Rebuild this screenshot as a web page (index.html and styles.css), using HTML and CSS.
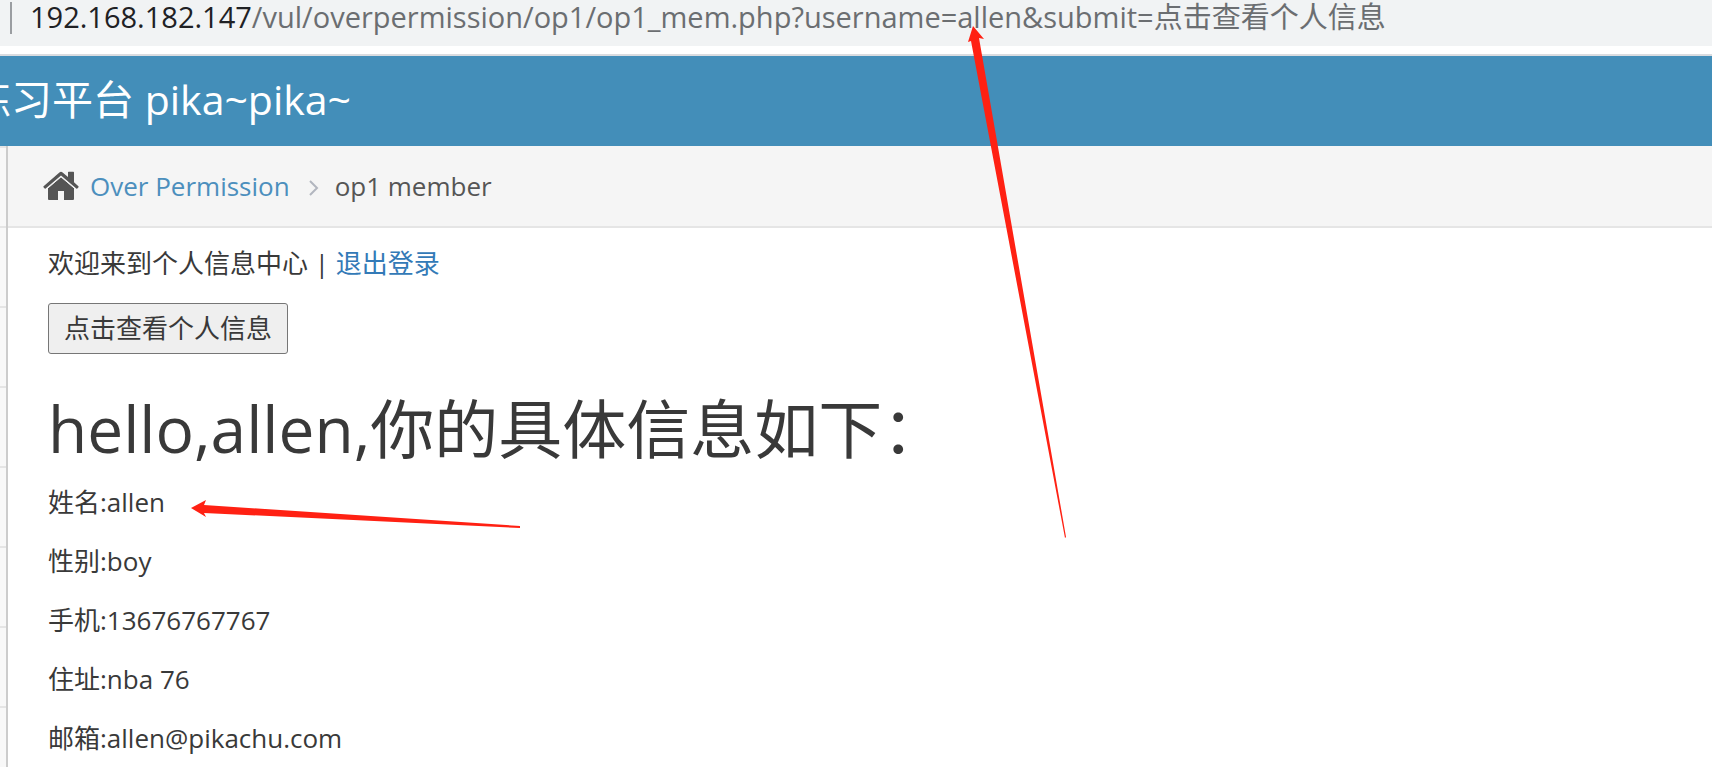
FILE: index.html
```html
<!DOCTYPE html>
<html lang="zh-CN">
<head>
<meta charset="utf-8">
<title>op1 member</title>
<link rel="stylesheet" href="styles.css">
</head>
<body>
<div class="address-bar">
  <span class="address-divider"></span>
  <span class="address-text"><span class="address-host">192.168.182.147</span>/vul/overpermission/op1/op1_mem.php?username=allen&amp;submit=点击查看个人信息</span>
</div>
<header class="navbar"><span class="brand">练习平台 pika~pika~</span></header>
<div class="main">
  <aside class="sidebar">
    <div class="sidebar-item"></div>
    <div class="sidebar-item"></div>
    <div class="sidebar-item"></div>
    <div class="sidebar-item"></div>
    <div class="sidebar-item"></div>
    <div class="sidebar-item"></div>
    <div class="sidebar-item"></div>
    <div class="sidebar-item"></div>
  </aside>
  <main class="content">
    <nav class="breadcrumb">
      <svg class="home-icon" viewBox="0 0 36 30" aria-hidden="true">
        <path d="M18 6 31 17V28q0 1-1 1H21V20H15V29H6q-1 0-1-1V17z"/>
        <path d="M.6 15.200 16.400 1.400q1.600-1.300 3.200 0L25 6V1.400q0-.6.6-.6h4.800q.6 0 .6.6v9.800l4.400 4q.5.500.1 1l-1.200 1.300q-.5.500-1 .1L18 4.600 2.700 17.600q-.5.400-1-.1L.5 16.200q-.4-.5.100-1z"/>
        <path class="roof-gap" d="M3 18.600 18 5.800 33 18.600"/>
      </svg>
      <a class="crumb-link" href="#">Over Permission</a>
      <svg class="chevron" viewBox="0 0 10 18" aria-hidden="true"><path d="M1 2 8 9 1 16"/></svg>
      <span class="crumb-current">op1 member</span>
    </nav>
    <div class="page-body">
      <p class="welcome">欢迎来到个人信息中心 | <a class="logout" href="#">退出登录</a></p>
      <form class="query"><button class="query-button" type="button">点击查看个人信息</button></form>
      <h1 class="greeting">hello,allen,你的具体信息如下：</h1>
      <p class="detail">姓名:allen</p>
      <p class="detail">性别:boy</p>
      <p class="detail">手机:13676767767</p>
      <p class="detail">住址:nba 76</p>
      <p class="detail">邮箱:allen@pikachu.com</p>
    </div>
  </main>
</div>
<svg class="arrows" width="1100" height="560" aria-hidden="true">
  <path d="M973 26 984 39 979 38 1066 537 1065 538 971 41 968 42z"/>
  <path d="M191 508 206 500 204 505 520 526 520 528 204 513 206 517z"/>
</svg>
</body>
</html>
```
FILE: styles.css
```css
* {
  box-sizing: border-box;
}

body {
  margin: 0;
  height: 100vh;
  display: flex;
  flex-direction: column;
  overflow: hidden;
  background: #fff;
  color: #393939;
  font-family: "Open Sans", "Noto Sans CJK SC", sans-serif;
  font-size: 26px;
  line-height: 39px;
}

.address-bar {
  flex: none;
  display: flex;
  align-items: flex-start;
  gap: 18px;
  height: 56px;
  padding-left: 10px;
  background: #f1f3f4;
  border-bottom: 2px solid #dadce0;
  box-shadow: inset 0 -8px #fff;
}

.address-divider {
  width: 2px;
  height: 32px;
  margin-top: 2px;
  background: #9a9da1;
}

.address-text {
  color: #6b6e71;
  font-size: 29px;
  line-height: 34px;
  white-space: nowrap;
}

.address-host {
  color: #202124;
}

.navbar {
  flex: none;
  display: flex;
  align-items: center;
  height: 90px;
  padding-bottom: 4px;
  background: #438eb9;
}

.brand {
  margin-left: -30px;
  color: #fff;
  font-size: 41px;
  line-height: 56px;
  white-space: nowrap;
}

.main {
  flex: 1;
  display: flex;
  min-height: 0;
}

.sidebar {
  flex: none;
  width: 8px;
  background: #f8f8f8;
  border-right: 2px solid #ccc;
}

.sidebar-item {
  height: 80px;
  border-top: 2px solid #e5e5e5;
}

.content {
  flex: 1;
  min-width: 0;
}

.breadcrumb {
  display: flex;
  align-items: center;
  height: 82px;
  padding-left: 35px;
  background: #f5f5f5;
  border-bottom: 2px solid #e5e5e5;
}

.home-icon {
  width: 36px;
  height: 30px;
  margin-right: 11px;
  fill: #555;
}

.roof-gap {
  fill: none;
  stroke: #f5f5f5;
  stroke-width: 1;
}

.crumb-link {
  color: #4c8fbd;
  text-decoration: none;
}

.chevron {
  width: 10px;
  height: 18px;
  margin: 4px 16px 0 19px;
  fill: none;
  stroke: #b2b6bf;
  stroke-width: 2;
}

.crumb-current {
  color: #555;
}

.page-body {
  padding: 16px 40px;
}

.welcome {
  margin: 0 0 20px;
}

.logout {
  color: #337ab7;
  text-decoration: none;
}

.query-button {
  display: block;
  padding: 5px 15px;
  background: #efefef;
  border: 1px solid #767676;
  border-radius: 3px;
  color: #393939;
  font: inherit;
}

.greeting {
  margin: 33px 0 12px;
  font-size: 64px;
  font-weight: 400;
  line-height: 84px;
}

.detail {
  margin: 0 0 20px;
}

.arrows {
  position: absolute;
  top: 0;
  left: 0;
  fill: #ff2113;
  pointer-events: none;
}
```
